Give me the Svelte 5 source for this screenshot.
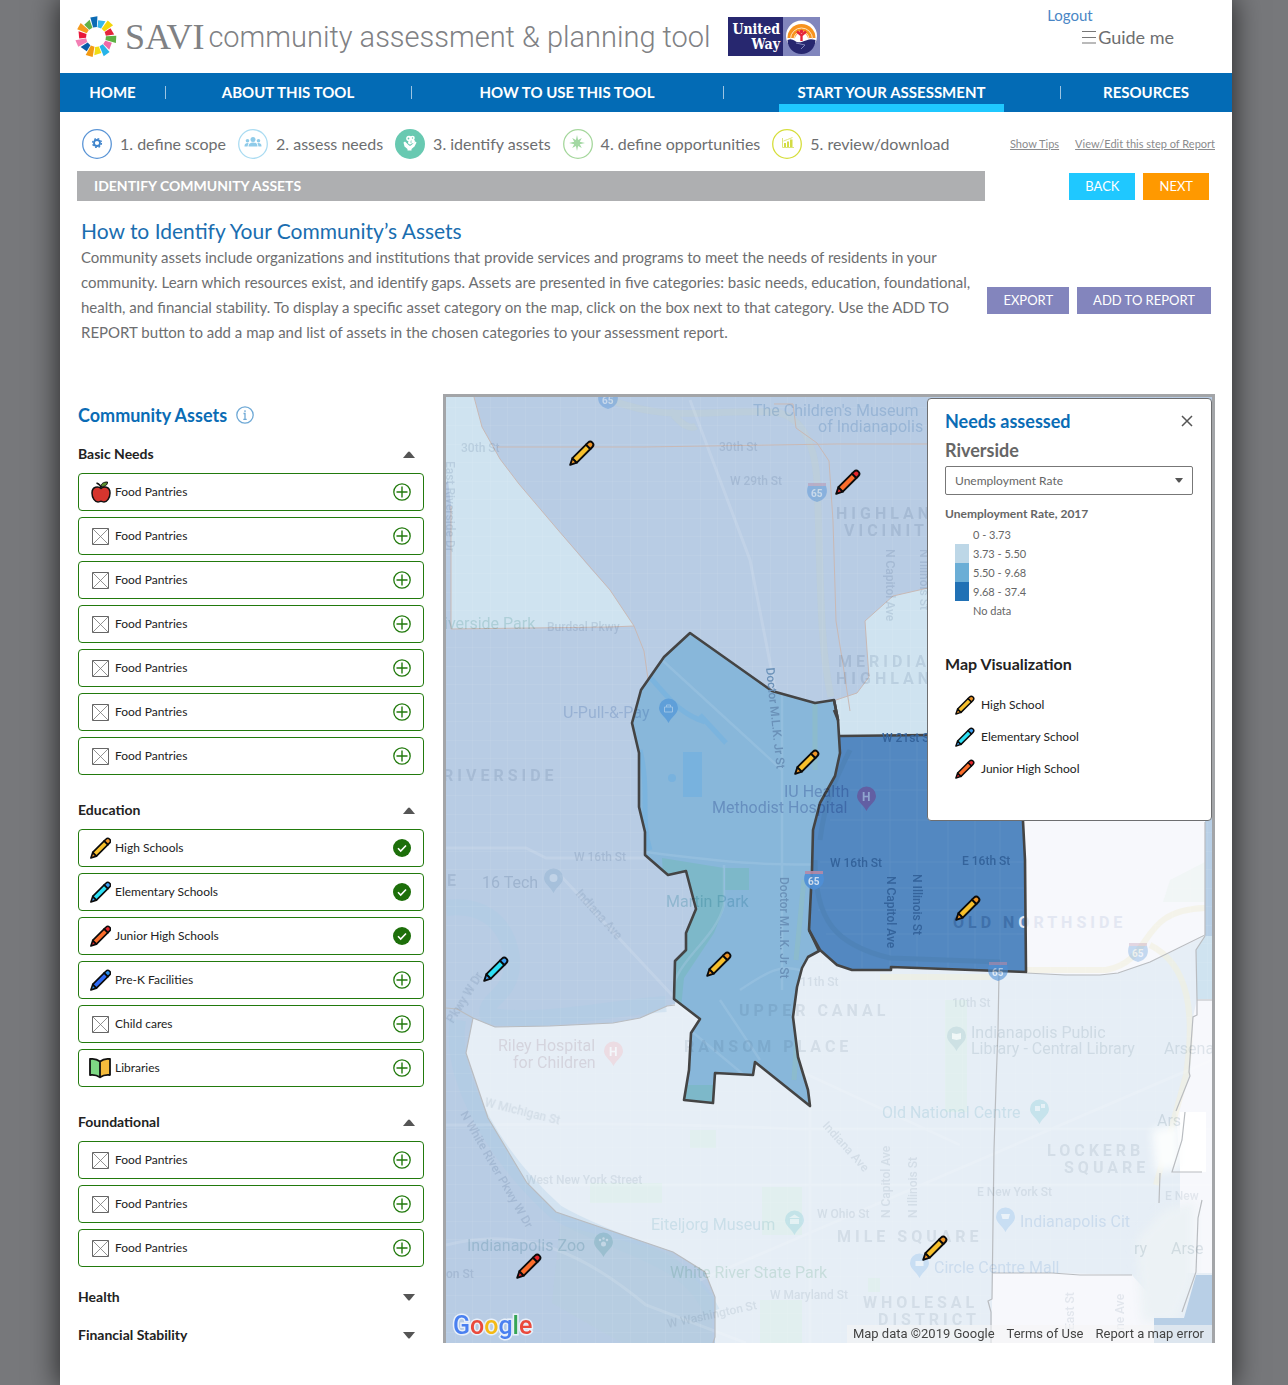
<script>
  const nav = ['Home', 'About this tool', 'How to use this tool', 'Start your assessment', 'Resources'];
  const active = 'Start your assessment';

  const steps = [
    { icon: 'gear', label: '1. define scope' },
    { icon: 'people', label: '2. assess needs' },
    { icon: 'hands', label: '3. identify assets' },
    { icon: 'star', label: '4. define opportunities' },
    { icon: 'chart', label: '5. review/download' }
  ];

  const food = (n) => Array.from({ length: n }, () => ({ name: 'Food Pantries', icon: 'box', on: false }));

  let sections = $state([
    { title: 'Basic Needs', open: true, items: [{ name: 'Food Pantries', icon: 'apple', on: false }, ...food(6)] },
    {
      title: 'Education',
      open: true,
      items: [
        { name: 'High Schools', icon: 'yellow', on: true },
        { name: 'Elementary Schools', icon: 'cyan', on: true },
        { name: 'Junior High Schools', icon: 'orange', on: true },
        { name: 'Pre-K Facilities', icon: 'blue', on: false },
        { name: 'Child cares', icon: 'box', on: false },
        { name: 'Libraries', icon: 'book', on: false }
      ]
    },
    { title: 'Foundational', open: true, items: food(3) },
    { title: 'Health', open: false, items: food(2) },
    { title: 'Financial Stability', open: false, items: food(2) }
  ]);

  const pencils = {
    yellow: ['#f7c02c', '#ef9526'],
    cyan: ['#2ee0f5', '#3ba0f3'],
    orange: ['#fb6d2b', '#e5262b'],
    blue: ['#2f6bf5', '#2a8ff0']
  };

  const classes = [
    { color: '#ffffff', label: '0 - 3.73' },
    { color: '#bdd7e7', label: '3.73 - 5.50' },
    { color: '#6baed6', label: '5.50 - 9.68' },
    { color: '#2171b5', label: '9.68 - 37.4' },
    { color: '#ffffff', label: 'No data' }
  ];

  const legend = [
    ['yellow', 'High School'],
    ['cyan', 'Elementary School'],
    ['orange', 'Junior High School']
  ];

  const markers = [
    [569, 440, 'yellow'],
    [835, 469, 'orange'],
    [794, 749, 'yellow'],
    [483, 956, 'cyan'],
    [706, 951, 'yellow'],
    [955, 895, 'yellow'],
    [922, 1235, 'yellow'],
    [516, 1253, 'orange']
  ];

  const wedges = ['#0b6bb4', '#35b7ec', '#f3d60b', '#e5243b', '#5fb043', '#f06aa8', '#27b4e8', '#f0dc14', '#f39a12', '#0a5ba8', '#f37fb4', '#e8173a', '#f59b1c', '#62b146'];

  let panelOpen = $state(true);
</script>

{#snippet pencil(kind)}
  <g stroke="#0b0b0b" stroke-width="1.9" stroke-linejoin="round">
    <path d="M3.4 18.2L1.2 24.8l6.6-2.2z" fill={pencils[kind][1]} />
    <path d="M3.4 18.2L17 4.6l4.4 4.4L7.8 22.6z" fill={pencils[kind][0]} />
    <path d="M17 4.6l2-2a3.1 3.1 0 0 1 4.4 4.4l-2 2z" fill={pencils[kind][1]} />
  </g>
{/snippet}

{#snippet assetIcon(kind)}
  {#if kind === 'apple'}
    <svg class="asset" viewBox="0 0 22 22" aria-hidden="true">
      <path d="M12 7.400C9.500 5.200 3 5 3 12c0 5 3 9 6 9 1.300 0 2-.7 3-.7s1.700.7 3 .7c3 0 6-4 6-9 0-7-6.500-6.800-9-4.600z" fill="#d6352e" stroke="#111" stroke-width="1.500" />
      <path d="M12 7.200C12 5 10 3 7.500 2" fill="none" stroke="#111" stroke-width="1.400" />
      <path d="M12 5.500c0-3 2.500-4.500 6.500-4.500 0 3-2.500 5-6.500 4.500z" fill="#5a8f2e" stroke="#111" />
    </svg>
  {:else if kind === 'book'}
    <svg class="asset" viewBox="0 0 22 22" aria-hidden="true">
      <path d="M11 4.500C8 2 4 1.500 1 2v16c3-.4 7 .2 10 2.300z" fill="#7ed884" />
      <path d="M11 4.500C14 2 18 1.500 21 2v16c-3-.4-7 .2-10 2.300z" fill="#f4bb3c" />
      <path d="M11 4.500C8 2 4 1.500 1 2v16c3-.4 7 .2 10 2.300 3-2.100 7-2.700 10-2.300V2c-3-.5-7 0-10 2.500v16" fill="none" stroke="#111" stroke-width="1.800" stroke-linejoin="round" />
    </svg>
  {:else if kind === 'box'}
    <svg class="asset" viewBox="0 0 22 22" aria-hidden="true">
      <path d="M3.500 3.500h16v16h-16z" fill="#fff" stroke="#666" />
      <path d="M3.500 3.500l16 16m0-16l-16 16" stroke="#777" stroke-width=".8" />
    </svg>
  {:else}
    <svg class="asset" viewBox="-1 0 26 26" aria-hidden="true">{@render pencil(kind)}</svg>
  {/if}
{/snippet}

<div class="page">
  <header class="top">
    <a class="brand" href="#home">
      <svg class="savi-mark" viewBox="-21 -21 42 42" aria-hidden="true">
        {#each wedges as c, i}
          <path d="M-1.900 -9.800L-3.600 -{i % 2 ? 16.5 : 20}L3.600 -{i % 2 ? 18 : 20.5}L1.900 -9.800z" fill={c} transform="rotate({-6 + (i * 360) / 14})" />
        {/each}
      </svg>
      <span class="savi">SAVI</span>
      <span class="tool">community assessment &amp; planning tool</span>
    </a>
    <svg class="united" viewBox="0 0 92 39" role="img" aria-label="United Way">
      <path d="M0 0h92v39H0z" fill="#8186bd" />
      <path d="M0 0h55v39H0z" fill="#27276f" />
      <g class="united-name" fill="#fff" text-anchor="end">
        <text x="52" y="17">United</text>
        <text x="52" y="32">Way</text>
      </g>
      <circle cx="73.500" cy="19" r="15.500" fill="#fff" />
      <path d="M59.500 21a14 14 0 0 1 28 0z" fill="#f7931e" />
      <path d="M62.500 22a11 11 0 0 1 22 0M66 22a7.500 7.500 0 0 1 15 0" fill="none" stroke="#ffe3bd" stroke-width="1" />
      <path d="M67 22a6.500 6.500 0 0 1 13 0z" fill="#fff" />
      <path d="M59.500 23c6-3 8 4 14 2s8-4 14-2a14 14 0 0 1-28 0z" fill="#27276f" />
      <circle cx="73.500" cy="14.500" r="1.800" fill="#e5243b" />
      <path d="M69 14.500l4.500 4 4.500-4M73.500 17v7" fill="none" stroke="#e5243b" stroke-width="2.400" />
      <path d="M68 26l9 2-4 4" fill="none" stroke="#8186bd" />
    </svg>
    <div class="account">
      <a class="logout" href="#logout">Logout</a>
      <button class="guide" type="button">
        <svg viewBox="0 0 14 14" aria-hidden="true"><path d="M0 1.500h14M0 7.500h14M0 13h14" stroke="#777" stroke-width="1.200" /></svg>Guide me
      </button>
    </div>
  </header>

  <nav class="nav" aria-label="Main">
    {#each nav as item}
      <a href="#{item.toLowerCase().replaceAll(' ', '-')}" aria-current={item === active ? 'page' : undefined}><span>{item}</span></a>
    {/each}
  </nav>

  <div class="steps">
    <ol>
      {#each steps as step}
        <li>
          <svg class="step-icon" viewBox="0 0 30 30" aria-hidden="true">
            {#if step.icon === 'gear'}
              <circle cx="15" cy="15" r="14.300" fill="#fff" stroke="#5b95d6" stroke-width="1.300" />
              <circle cx="15" cy="14" r="3" fill="none" stroke="#3f84cc" stroke-width="1.800" />
              <circle cx="15" cy="14" r="4.400" fill="none" stroke="#3f84cc" stroke-width="1.400" stroke-dasharray="1.750 1.705" />
            {:else if step.icon === 'people'}
              <circle cx="15" cy="15" r="14.300" fill="#fff" stroke="#abdcf2" stroke-width="1.300" />
              <g fill="#8fcbe9">
                <circle cx="15" cy="10.500" r="2.500" /><path d="M10.500 17.500c0-3 2-4 4.500-4s4.500 1 4.500 4z" />
                <circle cx="9.500" cy="11.700" r="1.800" /><path d="M6.500 17.500c0-3 1.500-3.500 4-3.500l-1 3.500z" />
                <circle cx="20.500" cy="11.700" r="1.800" /><path d="M23.500 17.500c0-3-1.500-3.500-4-3.500l1 3.500z" />
              </g>
            {:else if step.icon === 'hands'}
              <circle cx="15" cy="15" r="15" fill="#68c9b1" />
              <g fill="#fff">
                <path d="M10 12.500l3.500 3.500 1.500 1 1.500-1 4-3.500 1 1-2 4-3 2.500v1.500h-4V20l-3-2.500-1-4z" />
                <circle cx="14" cy="9.500" r="2.800" /><circle cx="17.500" cy="9" r="2.300" /><circle cx="18" cy="12.500" r="2" /><circle cx="15" cy="13.500" r="2" />
              </g>
              <circle cx="13.500" cy="9.500" r=".9" fill="#68c9b1" /><circle cx="17.500" cy="9" r=".7" fill="#68c9b1" /><circle cx="16" cy="13" r=".7" fill="#68c9b1" />
            {:else if step.icon === 'star'}
              <circle cx="15" cy="15" r="14.300" fill="#fff" stroke="#a5d79c" stroke-width="1.300" />
              <path d="M14 6l1.100 5 3.700-2-2 3.700L22 14l-5.200 1.300 2 3.700-3.700-2L14 22l-1.100-5-3.700 2 2-3.700L6 14l5.200-1.300-2-3.700 3.700 2z" fill="#a3d8a3" />
            {:else}
              <circle cx="15" cy="15" r="14.300" fill="#fff" stroke="#d6de3c" stroke-width="1.300" />
              <path d="M10.500 9v9.500H22" fill="none" stroke="#dde57a" />
              <path d="M12 14h2v4h-2zm3 -1.500h2V18h-2zm3-2h2.500V18H18z" fill="#d3dc45" />
              <path d="M11.500 12l4-1.500 5-2" stroke="#dde57a" fill="none" />
            {/if}
          </svg>
          {step.label}
        </li>
      {/each}
    </ol>
    <div class="tips">
      <a href="#tips">Show Tips</a>
      <a href="#report">View/Edit this step of Report</a>
    </div>
  </div>

  <div class="bar-row">
    <h1>Identify community assets</h1>
    <div class="actions">
      <button class="btn back" type="button">BACK</button>
      <button class="btn next" type="button">NEXT</button>
    </div>
  </div>

  <section class="intro">
    <div class="copy">
      <h2>How to Identify Your Community’s Assets</h2>
      <p>Community assets include organizations and institutions that provide services and programs to meet the needs of residents in your community. Learn which resources exist, and identify gaps. Assets are presented in five categories: basic needs, education, foundational, health, and financial stability. To display a specific asset category on the map, click on the box next to that category. Use the ADD TO REPORT button to add a map and list of assets in the chosen categories to your assessment report.</p>
    </div>
    <div class="actions">
      <button class="btn violet" type="button">EXPORT</button>
      <button class="btn violet" type="button">ADD TO REPORT</button>
    </div>
  </section>

  <main class="work">
    <aside class="assets">
      <h2>
        Community Assets
        <svg viewBox="0 0 18 18" aria-hidden="true">
          <circle cx="9" cy="9" r="8.200" fill="none" stroke="#6fa9d6" stroke-width="1.300" />
          <path d="M9 4.200v1.700M7.500 7.500H9v5.500M7.300 13.300h3.400" fill="none" stroke="#6fa9d6" stroke-width="1.300" />
        </svg>
      </h2>
      {#each sections as section}
        <section class:closed={!section.open}>
          <h3>
            <button type="button" aria-expanded={section.open} onclick={() => (section.open = !section.open)}>
              {section.title}
              <svg viewBox="0 0 12 7" aria-hidden="true"><path d={section.open ? 'M0 7l5-6q1-1 2 0l5 6z' : 'M0 0l5 6q1 1 2 0l5-6z'} fill="#555" /></svg>
            </button>
          </h3>
          {#if section.open}
            <ul>
              {#each section.items as item}
                <li>
                  <button type="button" aria-pressed={item.on} onclick={() => (item.on = !item.on)}>
                    {@render assetIcon(item.icon)}
                    <span>{item.name}</span>
                    <svg class="state" viewBox="0 0 18 18" aria-hidden="true">
                      {#if item.on}
                        <circle cx="9" cy="9" r="9" fill="#1d6f0a" />
                        <path d="M5 9.300l2.700 2.700L13 6.500" fill="none" stroke="#fff" stroke-width="1.600" />
                      {:else}
                        <circle cx="9" cy="9" r="8.200" fill="none" stroke="#227a0d" stroke-width="1.300" />
                        <path d="M9 3.500v11M3.500 9h11" stroke="#227a0d" stroke-width="1.400" />
                      {/if}
                    </svg>
                  </button>
                </li>
              {/each}
            </ul>
          {/if}
        </section>
      {/each}
    </aside>

    <div class="map">
      <svg class="canvas" viewBox="446 397 766 946" role="img" aria-label="Map of Riverside, Indianapolis">
        <defs>
          <pattern id="blocks" width="35" height="37" patternUnits="userSpaceOnUse">
            <path d="M0 .5h35M.5 0v37M17.500 0v37M0 18.500h35" fill="none" stroke="#fff" stroke-width=".8" opacity=".07" />
          </pattern>
          <filter id="soft" x="-30%" y="-30%" width="160%" height="160%"><feGaussianBlur stdDeviation="5" /></filter>
          <clipPath id="riverside"><path d="M690 633L664 657 641 690 632 723 639 753V807L645 832V855L668 875 686 871 696 909 686 933V950L675 961 674 999 700 1019 691 1033 689 1070 684 1100 713 1103 715 1073 753 1075 755 1062 810 1106 808 1090 798 1057 793 1017 797 987 802 968 808 957 819 951 809 930 812 870 813 830 820 803 835 776 840 753 838 720 834 700 815 703 772 691z" /></clipPath>
        </defs>

        <path d="M446 397h766v946H446z" fill="#b8cce4" />
        <path d="M446 397H474L482 427 500 459 519 484 558 530 590 568 610 590 634 626 610 627 451 629V506L448 480 446 483z" fill="#cfe3f0" />
        <path d="M928 588L893 596 865 621 867 650 869 677 857 693 836 700 840 736H1212V588z" fill="#cfe3f0" />
        <path d="M473 1018L495 1027 550 1026 613 1023 640 1018 667 1006 675 1004 700 900H1212V1343H715V1297L705 1272 673 1252 556 1212 527 1183 488 1118 466 1053z" fill="#e6eef6" />
        <path d="M1022 800H1205V936L1150 962 1118 973 1100 975 1026 973z" fill="#f7f8fc" />
        <path d="M1205 800H1212V936H1205z" fill="#b8cfe6" />
        <path d="M1205 936L1196 950 1197 999H1212V936z" fill="#cfe3f0" />
        <path d="M1197 999H1212V1273H1180V1170L1176 1111 1190 1076 1193 1017z" fill="#f7f8fc" />
        <path d="M992 1273L1052 1273 1132 1275 1154 1300V1343H992z" fill="#f7f8fc" />

        <g fill="none" stroke="#a9cce6" stroke-width="16" opacity=".3" stroke-linejoin="round">
          <path d="M446 908c30-4 60 8 66 50 2 40-30 40-24 58 60 8 120-8 178-12" />
          <path d="M458 1020c-10 60 40 140 98 192 60 36 130 40 156 100" />
        </g>
        <path d="M560 1225l112 28 40 45v45h-90l-70-40z" fill="#b5d0dc" opacity=".3" />
        <path d="M690 1130h26v18h-26zM590 1183h72v20h-72zM762 1187h40v48h-40zM945 1000h22v112h-22zM760 1300h42v43h-42zM868 1278h12v14h-12z" fill="#e1efef" />
        <path d="M1170 880l35-18v40h-42z" fill="#f1f6f6" />

        <g fill="none" stroke="#c0cfd3" stroke-width="7" opacity=".5">
          <path d="M610 400c60 22 90 10 160 12 30 0 45 30 47 70 4 90 2 160 14 215M670 410c10 14 20 20 26 16" />
        </g>
        <g fill="none" stroke="#f3f0d9" stroke-width="6" opacity=".5">
          <path d="M1026 970h80c50-10 30-60 99-62" />
          <path d="M1150 945c40 20 45 70 36 130l-30 110M880 977h110" />
        </g>
        <path d="M446 397h766v946H446z" fill="url(#blocks)" />
        <g fill="none" stroke="#fff" stroke-width="3" opacity=".13">
          <path d="M690 400L750 560 785 740M446 848h80l20 10h100M446 1125c100 0 180-4 350 4h416M446 1245c80-20 140 10 200 60l100 38M810 1100v243M560 875l140 150 260 120M560 1185h652M700 1280l512-220" />
        </g>

        <g fill="none" stroke="#c9b9b5" stroke-width="1">
          <path d="M474 397L482 427 500 459 519 484 558 530 610 590 634 626 610 627 451 629V506M497 447H643L836 444H928M774 404h19l3 24 21 15 12 18 4 60 3 100 8 50 6 40M634 626l10 25 4 28M928 588L893 596 865 621 867 650 869 677 857 693 836 700" />
        </g>
        <g fill="none" stroke="#b9bcc0" stroke-width="1.200">
          <path d="M446 1008L457 1009 473 1018 495 1027 550 1026 613 1023 640 1018 667 1006 675 1005M473 1018L466 1053 488 1118 527 1183 556 1212 673 1252 705 1272 715 1297V1337L713 1343M1026 973L1065 975H1100L1118 973 1150 962 1205 935V822M1205 936L1196 950 1197 1000H1212M1197 1000V1015L1193 1017 1189 1072 1190 1076 1176 1111M999 973L998 1030 996 1085 994 1150 992 1299 988 1301 991 1312V1343M992 1273H1052L1080 1275H1132" />
        </g>

        <path d="M840 736L928 735H1023L1023 821 1025 860 1026 972 891 967V970H852L837 965 820 950 809 930 812 870 813 830 820 803 835 776 840 753z" fill="#5388c1" />
        <path d="M690 633L664 657 641 690 632 723 639 753V807L645 832V855L668 875 686 871 696 909 686 933V950L675 961 674 999 700 1019 691 1033 689 1070 684 1100 713 1103 715 1073 753 1075 755 1062 810 1106 808 1090 798 1057 793 1017 797 987 802 968 808 957 819 951 809 930 812 870 813 830 820 803 835 776 840 753 838 720 834 700 815 703 772 691z" fill="#88b7da" />
        <g clip-path="url(#riverside)">
          <path d="M662 858l62 10v40l-10 25-30 45-4 40-10-5zM725 868h24v22h-24zM680 1085h34v20h-34z" fill="#7db8c9" />
          <path d="M683 752h19v45h-19z" fill="#78b2de" />
          <circle cx="672" cy="778" r="4" fill="#78b2de" />
          <path d="M645 672c20 20 30 40 60 50M640 750c10 40 0 70 10 100M700 715l26 28" fill="none" stroke="#76b2df" stroke-width="5" opacity=".7" />
          <path d="M645 852c80 10 110 14 200 12M782 690v300M740 990c30-20 40-25 60-20M724 865v40c-10 40-60 60-50 100M662 660l120 110M690 1030l60 50M720 1000l40 60" fill="none" stroke="#a5c9e3" stroke-width="2.500" opacity=".4" />
          <path d="M815 690v80M804 880l-8 80M800 990l-6 90" stroke="#8fbfc0" stroke-width="5" opacity=".5" fill="none" />
        </g>
        <g fill="none" stroke="#6b97c9" opacity=".45">
          <path d="M845 760h175M850 790h172M830 820h190M820 862h204M815 888h210M818 910h205M826 934h198M862 740v228M890 740v225M917 740v228M948 820v150M975 820v150M1000 820v150" />
          <path d="M815 860c0 60 20 85 75 98l110 4M850 750c-15 30-25 50-30 90" stroke="#4b7fae" stroke-width="5" />
        </g>

        <g class="label tint" fill="#7f93ab">
          <g class="bold spaced" opacity=".2">
            <text x="836" y="519">HIGHLAND</text>
            <text x="844" y="536">VICINITY</text>
            <text x="838" y="667">MERIDIAN</text>
            <text x="836" y="684">HIGHLAND</text>
            <text x="443" y="781">RIVERSIDE</text>
            <text x="447" y="886">E</text>
          </g>
          <g class="street" opacity=".22">
            <text x="461" y="452">30th St</text>
            <text x="719" y="451">30th St</text>
            <text x="730" y="485">W 29th St</text>
            <text x="547" y="631">Burdsal Pkwy</text>
            <text x="574" y="861">W 16th St</text>
            <text transform="translate(446 461) rotate(90)">East Riverside Dr</text>
            <text transform="translate(886 549) rotate(90)">N Capitol Ave</text>
            <text transform="translate(920 549) rotate(90)">N Illinois St</text>
            <text transform="translate(575 894) rotate(48)">Indiana Ave</text>
            <text transform="translate(453 1024) rotate(-58)">Pkwy W Dr</text>
            <text transform="translate(460 1114) rotate(60)">N White River Pkwy W Dr</text>
            <text x="446" y="1278">on St</text>
          </g>
          <g class="place" opacity=".28">
            <text x="482" y="888">16 Tech</text>
            <text x="563" y="718" fill="#5f86bd">U-Pull-&amp;-Pay</text>
            <text x="753" y="416" fill="#5f96c6">The Children's Museum</text>
            <text x="818" y="432" fill="#5f96c6">of Indianapolis</text>
            <text x="444" y="629" fill="#6db0a5">iverside Park</text>
          </g>
        </g>
        <g class="label tint" opacity=".17" fill="#7f93a3">
          <g class="bold spaced">
            <text x="739" y="1016">UPPER CANAL</text>
            <text x="684" y="1052">RANSOM PLACE</text>
            <text x="1047" y="1156">LOCKERB</text>
            <text x="1064" y="1173">SQUARE</text>
            <text x="837" y="1242">MILE SQUARE</text>
            <text x="863" y="1308">WHOLESAL</text>
            <text x="878" y="1325">DISTRICT</text>
          </g>
          <g class="street">
            <text x="800" y="986">11th St</text>
            <text x="952" y="1007">10th St</text>
            <text x="526" y="1184">West New York Street</text>
            <text x="977" y="1196">E New York St</text>
            <text x="817" y="1218">W Ohio St</text>
            <text x="770" y="1299">W Maryland St</text>
            <text x="1165" y="1200">E New</text>
            <text transform="translate(484 1106) rotate(14)">W Michigan St</text>
            <text transform="translate(822 1126) rotate(48)">Indiana Ave</text>
            <text transform="translate(668 1328) rotate(-12)">W Washington St</text>
            <text transform="translate(890 1218) rotate(-90)">N Capitol Ave</text>
            <text transform="translate(917 1218) rotate(-90)">N Illinois St</text>
            <text transform="translate(1074 1330) rotate(-90)">East St</text>
            <text transform="translate(1124 1330) rotate(-90)">ne Ave</text>
          </g>
        </g>
        <text x="953" y="928" class="label bold spaced"><tspan fill="#3f70aa">OLD N</tspan><tspan fill="#e3e7f2">ORTHSIDE</tspan></text>
        <g class="label place tint" opacity=".25">
          <text x="498" y="1051" fill="#b08f98">Riley Hospital</text>
          <text x="513" y="1068" fill="#b08f98">for Children</text>
          <text x="971" y="1038" fill="#93a9b3">Indianapolis Public</text>
          <text x="971" y="1054" fill="#93a9b3">Library - Central Library</text>
          <text x="1164" y="1054" fill="#93a9b3">Arsena</text>
          <text x="882" y="1118" fill="#7fbccd">Old National Centre</text>
          <text x="651" y="1230" fill="#7fbcc9">Eiteljorg Museum</text>
          <text x="467" y="1251" fill="#4f93a0">Indianapolis Zoo</text>
          <text x="670" y="1278" fill="#74b594">White River State Park</text>
          <text x="1020" y="1227" fill="#86b0dc">Indianapolis Cit</text>
          <text x="934" y="1273" fill="#86b0dc">Circle Centre Mall</text>
        </g>

        <path d="M1180 1112h26v60h-26z" fill="#fff" />
        <g filter="url(#soft)">
          <path d="M1152 1130l28-6v44l-24 4z" fill="#fbfdfd" />
          <path d="M1136 1240l28-30 30-8v80l-18 40h-34z" fill="#ecf2f5" />
        </g>
        <path d="M1196 1275h16v68h-58v-25h30z" fill="#b8cfe6" />
        <path d="M1185 1112l-3 28-10 32h30M1160 1173l-1 30M1202 1200l-4 18-2 54-14 40" fill="none" stroke="#b9bcc0" stroke-width="1.200" />
        <g class="label place tint" opacity=".28" fill="#93a9b3">
          <text x="1134" y="1254">ry</text>
          <text x="1171" y="1254">Arse</text>
          <text x="1157" y="1126">Ars</text>
        </g>

        <g fill="none" stroke="#444" stroke-width="2.600" stroke-linejoin="round">
          <path d="M840 736L928 735H1023L1023 821 1025 860 1026 972 891 967V970H852L837 965 820 950 809 930" />
          <path d="M690 633L664 657 641 690 632 723 639 753V807L645 832V855L668 875 686 871 696 909 686 933V950L675 961 674 999 700 1019 691 1033 689 1070 684 1100 713 1103 715 1073 753 1075 755 1062 810 1106 808 1090 798 1057 793 1017 797 987 802 968 808 957 819 951 809 930 812 870 813 830 820 803 835 776 840 753 838 720 834 700 815 703 772 691z" />
          <path d="M834 700l4 20-4-10" />
        </g>

        <g class="label place tint" opacity=".5">
          <text x="784" y="797" fill="#7f8fc0">IU Health</text>
          <text x="712" y="813" fill="#7f8fc0">Methodist Hospital</text>
          <text x="666" y="907" fill="#8cc8d0">Martin Park</text>
        </g>
        <g class="label street" fill="#6a91b8">
          <text transform="translate(766 668) rotate(84)">Doctor M.L.K. Jr St</text>
          <text transform="translate(780 877) rotate(90)">Doctor M.L.K. Jr St</text>
        </g>
        <g class="label street" fill="#34639b">
          <text x="830" y="867">W 16th St</text>
          <text x="962" y="865">E 16th St</text>
          <text x="882" y="742">W 21st St</text>
          <text transform="translate(887 876) rotate(90)">N Capitol Ave</text>
          <text transform="translate(913 874) rotate(90)">N Illinois St</text>
        </g>

        <g fill="#5f9fd9">
          <path d="M659 708a9.500 9.500 0 0 1 19 0c0 6-7 9-9.500 15-2.500-6-9.500-9-9.500-15z" /><path d="M664.500 707h8v5h-8zM666.500 707v-2h4v2" stroke="#9cc3e6" fill="none" />
        </g>
        <path d="M857 796a9.500 9.500 0 0 1 19 0c0 6-7 9-9.500 15-2.500-6-9.500-9-9.500-15z" fill="#625fa3" />
        <text x="862" y="801" class="glyph" fill="#8fa5cf">H</text>
        <g opacity=".5">
          <path d="M604 1051a9.500 9.500 0 0 1 19 0c0 6-7 9-9.500 15-2.500-6-9.500-9-9.500-15z" fill="#f2c9cf" /><text x="609" y="1056" class="glyph" fill="#fff">H</text>
          <path d="M947 1036a9.500 9.500 0 0 1 19 0c0 6-7 9-9.500 15-2.500-6-9.500-9-9.500-15z" fill="#b9d3da" /><path d="M952 1033l4.500 1 4.500-1v6l-4.500 1-4.500-1z" fill="#fff" />
          <path d="M1030 1109a9.500 9.500 0 0 1 19 0c0 6-7 9-9.500 15-2.500-6-9.500-9-9.500-15z" fill="#a5d8e2" /><path d="M1035 1106h5v5h-5zM1041 1104h4v4h-4z" fill="#e6f4f8" />
          <path d="M785 1220a9.500 9.500 0 0 1 19 0c0 6-7 9-9.500 15-2.500-6-9.500-9-9.500-15z" fill="#a5d8e2" /><path d="M789 1218l5.500-3.500 5.500 3.500zM790 1219h9v5h-9z" fill="#e6f4f8" />
          <path d="M594 1242a9.500 9.500 0 0 1 19 0c0 6-7 9-9.500 15-2.500-6-9.500-9-9.500-15z" fill="#7fb0bd" /><circle cx="603.500" cy="1244" r="2.500" fill="#cfe0ea" /><circle cx="600" cy="1240" r="1.200" fill="#cfe0ea" /><circle cx="603.500" cy="1238.500" r="1.200" fill="#cfe0ea" /><circle cx="607" cy="1240" r="1.200" fill="#cfe0ea" />
          <path d="M996 1217a9.500 9.500 0 0 1 19 0c0 6-7 9-9.500 15-2.500-6-9.500-9-9.500-15z" fill="#a9cdf0" /><path d="M1001 1214h9l-1.500 5h-6z" fill="#eef5fc" />
          <path d="M910 1263a9.500 9.500 0 0 1 19 0c0 6-7 9-9.500 15-2.500-6-9.500-9-9.500-15z" fill="#a9cdf0" /><path d="M915.500 1261h8v5h-8z" fill="#eef5fc" />
          <path d="M544 878a9.500 9.500 0 0 1 19 0c0 6-7 9-9.500 15-2.500-6-9.500-9-9.500-15z" fill="#93b3d2" /><circle cx="553.500" cy="878" r="4" fill="#c9d9ea" />
        </g>
        {#each [[608, 399, 0.4], [817, 492, 0.45], [814, 880, 0.9], [998, 971, 0.6], [1138, 952, 0.3]] as [x, y, o]}
          <g transform="translate({x} {y})" opacity={o}>
            <path d="M-9 -6h18c3 9-2 14-9 16-7-2-12-7-9-16z" fill="#4f8fd6" />
            <path d="M-9 -9h18v3H-9z" fill="#b58aa8" />
            <text x="-6" y="5" class="shield" fill="#dce9f7">65</text>
          </g>
        {/each}

        {#each markers as [x, y, kind]}
          <g transform="translate({x} {y})">{@render pencil(kind)}</g>
        {/each}

        <text x="453" y="1334" class="google">
          <tspan fill="#4a80f0">G</tspan><tspan fill="#ea4a3c">o</tspan><tspan fill="#f5ba15">o</tspan><tspan fill="#4a80f0">g</tspan><tspan fill="#36a557">l</tspan><tspan fill="#ea4a3c">e</tspan>
        </text>
      </svg>

      <div class="credits">
        <span>Map data ©2019 Google</span>
        <a href="#terms">Terms of Use</a>
        <a href="#map-error">Report a map error</a>
      </div>

      {#if panelOpen}
        <div class="panel">
          <div class="panel-head">
            <h2>Needs assessed</h2>
            <button type="button" aria-label="Close" onclick={() => (panelOpen = false)}>
              <svg viewBox="0 0 12 12" aria-hidden="true"><path d="M1 1l10 10M11 1L1 11" stroke="#555" stroke-width="1.500" /></svg>
            </button>
          </div>
          <h3 class="area">Riverside</h3>
          <div class="select">
            <select aria-label="Indicator"><option>Unemployment Rate</option></select>
            <svg viewBox="0 0 8 5" aria-hidden="true"><path d="M0 0h8L5 4q-1 1-2 0z" fill="#555" /></svg>
          </div>
          <h4>Unemployment Rate, 2017</h4>
          <ul class="classes">
            {#each classes as c}
              <li><i style="background: {c.color}"></i>{c.label}</li>
            {/each}
          </ul>
          <h3 class="viz">Map Visualization</h3>
          <ul class="legend">
            {#each legend as [kind, label]}
              <li><svg viewBox="0 0 26 26" aria-hidden="true">{@render pencil(kind)}</svg>{label}</li>
            {/each}
          </ul>
        </div>
      {/if}
    </div>
  </main>
</div>

<style>
  :global(body) {
    background: #77787b;
    font-family: Lato, 'Open Sans', sans-serif;
    color: #6d6e70;
  }
  :global(*) {
    box-sizing: border-box;
  }
  h1, h2, h3, h4, p, ul, ol {
    margin: 0;
    padding: 0;
  }
  ul, ol {
    list-style: none;
  }
  button {
    font: inherit;
    color: inherit;
    background: none;
    border: 0;
    padding: 0;
    cursor: pointer;
  }
  .page {
    margin: 0 56px 0 60px;
    min-height: 100vh;
    padding-bottom: 30px;
    background: #fff;
    box-shadow: 0 0 26px 2px rgba(0, 0, 0, 0.65);
  }
  .top {
    display: flex;
    align-items: center;
    height: 73px;
    padding: 0 58px 0 15px;
  }
  .brand {
    display: flex;
    align-items: center;
    color: #808184;
    text-decoration: none;
    white-space: nowrap;
  }
  .savi-mark {
    width: 42px;
    height: 42px;
    margin-right: 8px;
  }
  .savi {
    margin-right: 4px;
    font: 36px/44px 'Liberation Serif', serif;
  }
  .tool {
    font: 300 29px/44px Roboto, sans-serif;
  }
  .united {
    width: 92px;
    height: 39px;
    margin-left: 17px;
  }
  .united-name {
    font: 700 14px 'DejaVu Serif Condensed', 'DejaVu Serif', serif;
  }
  .account {
    display: flex;
    flex-direction: column;
    align-items: flex-start;
    align-self: flex-start;
    margin-left: auto;
    padding-top: 5px;
  }
  .logout {
    font-size: 15px;
    line-height: 20px;
    color: #4a86c5;
    text-decoration: none;
  }
  .guide {
    display: flex;
    align-items: center;
    margin-left: 35px;
    font-size: 18px;
    line-height: 24px;
  }
  .guide svg {
    width: 14px;
    height: 14px;
    margin-right: 2px;
  }
  .nav {
    display: grid;
    grid-template-columns: 105fr 246fr 312fr 337fr 172fr;
    background: #036bb5;
  }
  .nav a {
    position: relative;
    display: flex;
    justify-content: center;
    color: #fff;
    font-size: 15px;
    font-weight: 700;
    line-height: 39px;
    text-decoration: none;
    text-transform: uppercase;
    white-space: nowrap;
  }
  .nav a + a::before {
    content: '';
    position: absolute;
    left: 0;
    top: 13px;
    height: 13px;
    border-left: 1px solid #9cc4e2;
  }
  .nav span {
    padding: 0 19px;
  }
  .nav a[aria-current] span {
    box-shadow: inset 0 -8px #1fc8ff;
  }
  .steps {
    display: flex;
    align-items: center;
    justify-content: space-between;
    padding: 17px 17px 12px 22px;
  }
  .steps ol {
    display: flex;
    gap: 12px;
  }
  .steps li {
    display: flex;
    align-items: center;
    gap: 8px;
    font-size: 16px;
    line-height: 28px;
    white-space: nowrap;
  }
  .step-icon {
    width: 30px;
    height: 30px;
  }
  .tips {
    display: flex;
    gap: 16px;
    font-size: 11px;
    line-height: 16px;
  }
  .tips a {
    color: #8a8b8d;
    white-space: nowrap;
  }
  .bar-row {
    display: flex;
    align-items: center;
    padding: 0 23px 0 17px;
  }
  h1 {
    flex: 1;
    margin-right: 84px;
    padding-left: 17px;
    background: #aeafb1;
    color: #fff;
    font-size: 14px;
    font-weight: 700;
    line-height: 30px;
    text-transform: uppercase;
  }
  .actions {
    display: flex;
    gap: 8px;
  }
  .btn {
    padding: 0 16px;
    color: #fff;
    font-size: 13px;
    line-height: 27px;
    white-space: nowrap;
  }
  .back {
    background: #1fc8ff;
  }
  .next {
    background: #ff9900;
  }
  .violet {
    background: #8385bd;
  }
  .intro {
    display: flex;
    align-items: center;
    justify-content: space-between;
    gap: 14px;
    padding: 16px 21px 49px;
  }
  .intro h2 {
    color: #1a6eb0;
    font-size: 21px;
    font-weight: 400;
    line-height: 28px;
  }
  .intro p {
    font-size: 15px;
    line-height: 25px;
  }
  .intro .actions {
    padding-top: 38px;
  }
  .work {
    display: grid;
    grid-template-columns: 346px minmax(0, 1fr);
    gap: 19px;
    align-items: start;
    padding: 0 17px 0 18px;
  }
  .assets h2 {
    display: flex;
    align-items: center;
    gap: 9px;
    padding: 9px 0 8px;
    color: #0a6cb5;
    font-size: 18px;
    font-weight: 700;
    line-height: 24px;
  }
  .assets h2 svg {
    width: 18px;
    height: 18px;
  }
  .assets section + section {
    margin-top: 16px;
  }
  .assets section.closed {
    margin-top: 11px;
  }
  .assets section.closed + section.closed {
    margin-top: 0;
  }
  .assets h3 button {
    display: flex;
    align-items: center;
    justify-content: space-between;
    width: 100%;
    padding-right: 9px;
    color: #222;
    font-size: 14px;
    font-weight: 700;
    line-height: 38px;
  }
  .assets h3 svg {
    width: 12px;
    height: 7px;
  }
  .assets ul {
    display: grid;
    gap: 6px;
  }
  .assets li button {
    display: flex;
    align-items: center;
    gap: 4px;
    width: 100%;
    height: 38px;
    padding: 0 12px 0 10px;
    border: 1px solid #227a0d;
    border-radius: 4px;
    color: #222;
    font-size: 12px;
    line-height: 18px;
  }
  .asset {
    width: 22px;
    height: 22px;
  }
  .state {
    width: 18px;
    height: 18px;
    margin-left: auto;
  }
  .map {
    position: relative;
    border: 3px solid #a3a5a8;
    border-bottom: 0;
  }
  .canvas {
    display: block;
    width: 100%;
  }
  .label {
    font-family: Roboto, sans-serif;
    font-size: 16px;
  }
  .tint {
    mix-blend-mode: multiply;
  }
  .place {
    font-size: 16px;
  }
  .street {
    font-size: 12px;
    font-weight: 500;
  }
  .bold {
    font-weight: 700;
  }
  .spaced {
    font-size: 16px;
    letter-spacing: 4px;
  }
  .glyph {
    font: 700 12px Roboto, sans-serif;
  }
  .shield {
    font: 700 10px Roboto, sans-serif;
  }
  .google {
    font: 500 25px Roboto, sans-serif;
    stroke: #e8f0fa;
    stroke-width: 3px;
    paint-order: stroke;
  }
  .credits {
    position: absolute;
    right: 0;
    bottom: 0;
    display: flex;
    gap: 12px;
    padding: 0 8px 0 6px;
    background: rgba(245, 245, 245, 0.6);
    color: #444;
    font: 13px/18px Roboto, sans-serif;
  }
  .credits a {
    color: inherit;
    text-decoration: none;
  }
  .panel {
    position: absolute;
    top: 1px;
    right: 0;
    width: 285px;
    padding: 9px 18px 41px 17px;
    border: 1px solid #6d6e70;
    border-radius: 4px;
    background: #fff;
  }
  .panel-head {
    display: flex;
    align-items: center;
    justify-content: space-between;
  }
  .panel h2 {
    color: #0a6cb5;
    font-size: 18px;
    line-height: 26px;
  }
  .panel-head svg {
    display: block;
    width: 12px;
    height: 12px;
  }
  .area {
    color: #666;
    font-size: 18px;
    line-height: 32px;
  }
  .select {
    position: relative;
  }
  .select select {
    display: block;
    width: 100%;
    height: 29px;
    padding: 0 9px;
    border: 1px solid #777;
    border-radius: 2px;
    appearance: none;
    background: #fff;
    color: #666;
    font: 12px/18px Lato, sans-serif;
  }
  .select svg {
    position: absolute;
    right: 10px;
    top: 12px;
    width: 8px;
    height: 5px;
    pointer-events: none;
  }
  .panel h4 {
    padding-top: 9px;
    color: #666;
    font-size: 12px;
    line-height: 20px;
  }
  .classes {
    padding: 1px 0 0 10px;
  }
  .classes li {
    display: flex;
    align-items: center;
    gap: 4px;
    color: #666;
    font-size: 11px;
    line-height: 19px;
  }
  .classes i {
    width: 14px;
    height: 19px;
  }
  .viz {
    padding: 31px 0 14px;
    color: #222;
    font-size: 16px;
    line-height: 26px;
  }
  .legend {
    display: grid;
    gap: 12px;
    padding: 4px 0 0 10px;
  }
  .legend li {
    display: flex;
    align-items: center;
    gap: 6px;
    color: #222;
    font-size: 12px;
    line-height: 20px;
  }
  .legend svg {
    width: 20px;
    height: 20px;
  }
</style>
